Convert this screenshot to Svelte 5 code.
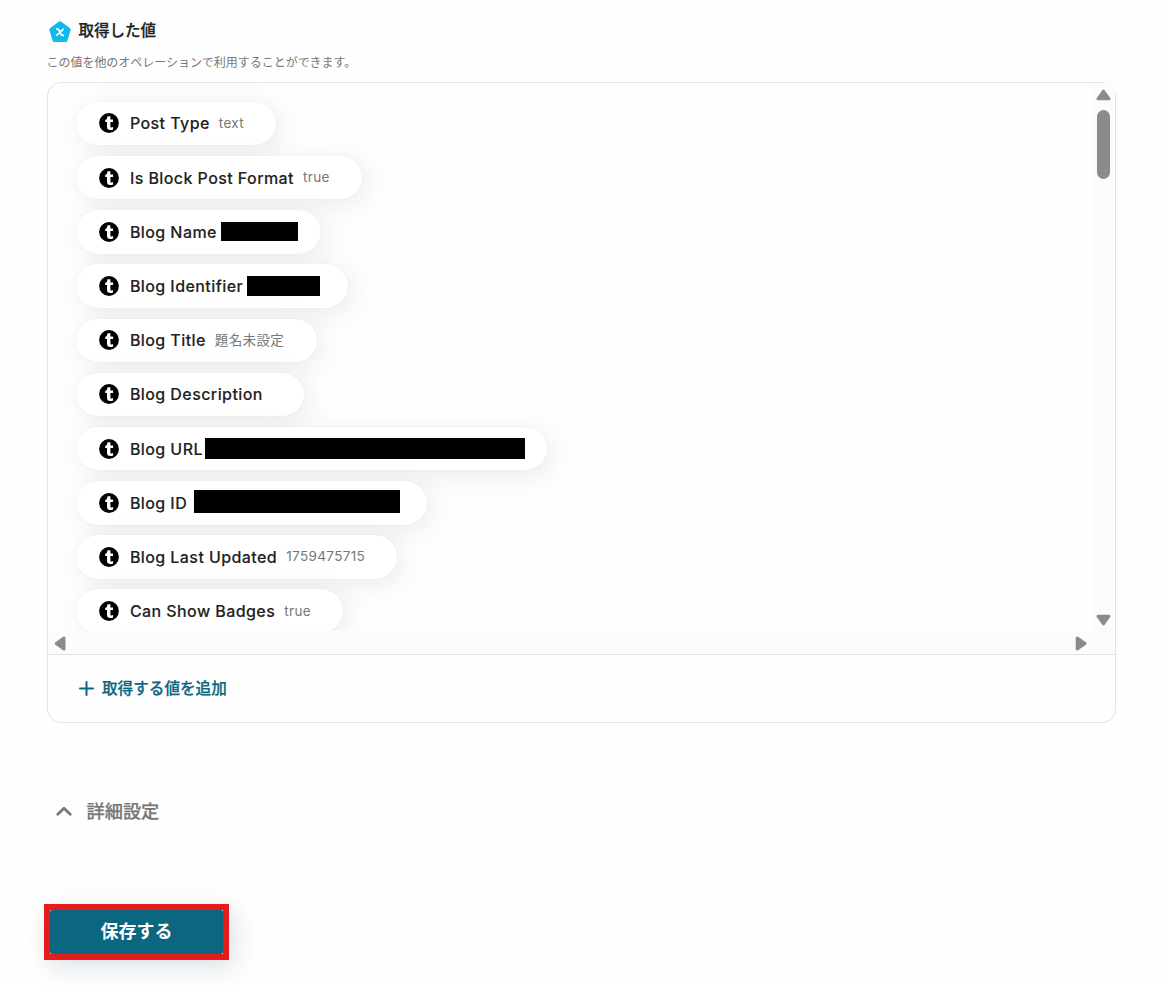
<script lang="ts">
  interface Output {
    label: string;
    value?: string;
    width: number;
    mask?: { gap: number; width: number; height: number; shift: number };
  }

  const outputs: Output[] = [
    { label: 'Post Type', value: 'text', width: 200 },
    { label: 'Is Block Post Format', value: 'true', width: 286 },
    { label: 'Blog Name', width: 245, mask: { gap: 4.4, width: 77, height: 19, shift: 0 } },
    { label: 'Blog Identifier', width: 272, mask: { gap: 3.6, width: 73.5, height: 20, shift: 0 } },
    { label: 'Blog Title', value: '題名未設定', width: 241 },
    { label: 'Blog Description', width: 228 },
    { label: 'Blog URL', width: 471, mask: { gap: 2.2, width: 320, height: 21, shift: 0 } },
    { label: 'Blog ID', width: 351, mask: { gap: 7.2, width: 206, height: 23, shift: 2 } },
    { label: 'Blog Last Updated', value: '1759475715', width: 321 },
    { label: 'Can Show Badges', value: 'true', width: 267 },
  ];
</script>

<main class="page">
  <header class="heading">
    <svg class="badge" width="24" height="24" viewBox="0 0 24 24">
      <path d="M12 2.9 21 9.6 17.8 20.2H6.2L3 9.6Z" fill="#12b9ec" stroke="#12b9ec" stroke-width="3.4" stroke-linejoin="round" />
      <path d="M8.1 9.200H9.600C10.300 9.200 10.600 9.500 11 10.200L13.200 14.500C13.500 15.100 13.800 15.400 14.500 15.400H16M15.800 9.200C14 9.200 10.300 15.400 8 15.400" fill="none" stroke="#fff" stroke-width="1.700" />
    </svg>
    <h2>取得した値</h2>
  </header>
  <p class="note">この値を他のオペレーションで利用することができます。</p>

  <section class="panel">
    <div class="scroller">
      <div class="list">
        {#each outputs as output (output.label)}
          <div class="pill" style="width: {output.width}px">
            <svg class="logo" width="20" height="20" viewBox="0 0 20 20">
              <circle cx="10" cy="10" r="9.9" fill="#000" />
              <path d="M8.5 3.3h2.9v3.3h2.7v2.5h-2.7v3.8c0 1.1.4 1.5 1.2 1.5.5 0 1-.1 1.5-.4v2.5c-.7.4-1.5.6-2.6.6-2.4 0-3.5-1.2-3.5-3.3V9.1H6.2V7c1.5-.5 2.2-1.7 2.3-3.7z" fill="#fff" />
            </svg>
            <span class="label">{output.label}</span>
            {#if output.value}
              <span class="value">{output.value}</span>
            {/if}
            {#if output.mask}
              <span
                class="mask"
                style="width: {output.mask.width}px; height: {output.mask.height}px; margin-left: {output.mask.gap}px; margin-bottom: {output.mask.shift}px"
              ></span>
            {/if}
          </div>
        {/each}
      </div>
      <div class="bar vertical">
        <svg width="15" height="12" viewBox="0 0 15 12"><path d="M7.5 2.2 13 9.8H2Z" /></svg>
        <div class="thumb"></div>
        <svg class="end" width="15" height="12" viewBox="0 0 15 12"><path d="M2 2.2H13L7.5 9.8Z" /></svg>
      </div>
      <div class="bar horizontal">
        <svg width="12" height="15" viewBox="0 0 12 15"><path d="M2.2 7.5 10 2V13Z" /></svg>
        <svg width="12" height="15" viewBox="0 0 12 15"><path d="M2.2 2 10 7.5 2.2 13Z" /></svg>
      </div>
    </div>
    <button class="add">
      <svg width="15" height="15" viewBox="0 0 15 15"><path d="M7.5 1V14M1 7.5H14" /></svg>
      <span>取得する値を追加</span>
    </button>
  </section>

  <button class="advanced">
    <svg width="16" height="10" viewBox="0 0 16 10"><path d="M1.8 8.3 8 2.3 14.2 8.3" /></svg>
    <span>詳細設定</span>
  </button>

  <button class="save"><span>保存する</span></button>
</main>

<style>
  :global(body) {
    background: #fefefe;
  }

  .page {
    box-sizing: border-box;
    height: 985px;
    padding: 19px 46px 0 47px;
    overflow: hidden;
    font-family: Inter, "Noto Sans CJK JP", sans-serif;
    color: #222;
  }

  button {
    display: flex;
    align-items: center;
    padding: 0;
    border: 0;
    background: none;
    font-family: inherit;
  }

  .heading {
    display: flex;
    align-items: center;
    gap: 6.5px;
    height: 25px;
    margin-left: 1px;
  }

  .heading h2 {
    margin: 0 0 2px;
    font-size: 15.5px;
    line-height: 24px;
    font-weight: 500;
    -webkit-text-stroke: 0.25px currentColor;
  }

  .note {
    margin: 10px 0 0 -0.5px;
    font-size: 12px;
    line-height: 18px;
    color: #777;
    letter-spacing: -0.03px;
  }

  .panel {
    box-sizing: border-box;
    width: 1069px;
    height: 641px;
    margin-top: 10px;
    border: 1px solid #e3e3e3;
    border-radius: 14px;
  }

  .scroller {
    display: grid;
    grid-template: 548px 23px / 1044px 23px;
    border-bottom: 1px solid #e3e3e3;
  }

  .list {
    display: flex;
    flex-direction: column;
    gap: 10.8px;
    padding: 18.8px 28px 0;
    overflow: hidden;
    border-top-left-radius: 13px;
  }

  .pill {
    box-sizing: border-box;
    display: flex;
    flex: none;
    align-items: center;
    height: 43.4px;
    padding-left: 23.4px;
    border-radius: 22px;
    background: #fff;
    box-shadow: 0 0 2px rgba(0, 0, 0, 0.06), 5px 5px 28px rgba(0, 0, 0, 0.08);
    white-space: nowrap;
  }

  .logo {
    margin-right: 10.5px;
  }

  .label {
    font-size: 16px;
    font-weight: 500;
    letter-spacing: 0.42px;
    -webkit-text-stroke: 0.1px currentColor;
  }

  .value {
    margin-left: 9px;
    margin-bottom: 1px;
    font-size: 13.5px;
    line-height: 18px;
    color: #777;
    letter-spacing: 0.36px;
  }

  .mask {
    background: #000;
  }

  .bar {
    display: flex;
    align-items: center;
    background: #fcfcfc;
  }

  .bar path {
    fill: #8b8b8b;
    stroke: #8b8b8b;
    stroke-width: 3;
    stroke-linejoin: round;
  }

  .vertical {
    flex-direction: column;
    padding-top: 6px;
    padding-bottom: 5px;
  }

  .thumb {
    width: 13px;
    height: 69px;
    margin-top: 9px;
    border-radius: 7px;
    background: #8b8b8b;
  }

  .end {
    margin-top: auto;
  }

  .horizontal {
    grid-column: 1 / 3;
    justify-content: space-between;
    padding: 1px 28.5px 0 5.5px;
  }

  .add {
    gap: 8px;
    height: 66px;
    margin-left: 31px;
    font-size: 15.6px;
    font-weight: 500;
    color: #0b6680;
    -webkit-text-stroke: 0.25px currentColor;
  }

  .add span {
    margin-bottom: 3px;
  }

  .add path {
    stroke: currentColor;
    stroke-width: 2;
    stroke-linecap: round;
  }

  .advanced {
    gap: 15px;
    height: 28px;
    margin: 74px 0 0 8.5px;
    font-size: 18.2px;
    font-weight: 500;
    color: #777;
    -webkit-text-stroke: 0.25px currentColor;
  }

  .advanced span {
    margin-bottom: 2px;
  }

  .advanced path {
    fill: none;
    stroke: currentColor;
    stroke-width: 2.8;
    stroke-linecap: round;
    stroke-linejoin: round;
  }

  .save {
    box-sizing: border-box;
    width: 185px;
    height: 56px;
    margin: 79px 0 0 -3px;
    border: 6px solid #e71a1c;
    background: #fff;
    box-shadow: 5px 7px 24px rgba(11, 50, 70, 0.14);
  }

  .save span {
    width: 100%;
    height: 44px;
    border-radius: 2px;
    background: #0b6680;
    font-size: 18px;
    line-height: 43px;
    font-weight: 700;
    color: #fff;
    text-align: center;
  }
</style>
